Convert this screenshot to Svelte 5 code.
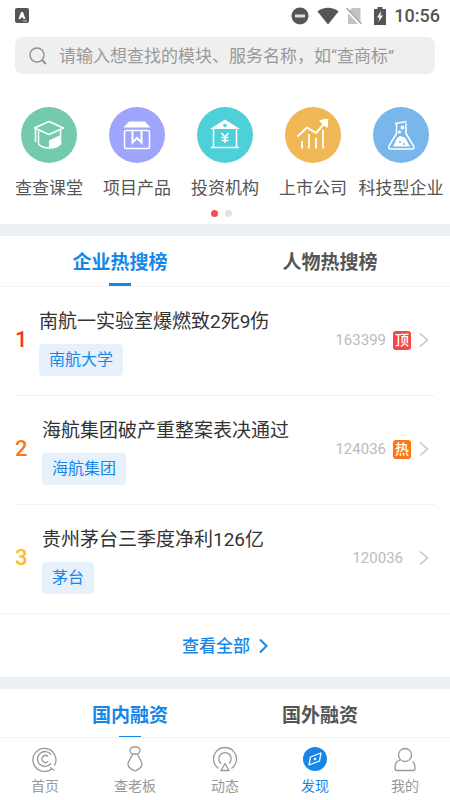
<script lang="ts">
	const services = [
		{ icon: 'class', label: '查查课堂', color: '#74cbac' },
		{ icon: 'product', label: '项目产品', color: '#9fa5fc' },
		{ icon: 'invest', label: '投资机构', color: '#4dd0d8' },
		{ icon: 'listed', label: '上市公司', color: '#efb854' },
		{ icon: 'tech', label: '科技型企业', color: '#79b6eb' }
	];

	const hotList = [
		{ title: '南航一实验室爆燃致2死9伤', tag: '南航大学', count: 163399, badge: '顶' },
		{ title: '海航集团破产重整案表决通过', tag: '海航集团', count: 124036, badge: '热' },
		{ title: '贵州茅台三季度净利126亿', tag: '茅台', count: 120036, badge: '' }
	];

	const hotTabs = ['企业热搜榜', '人物热搜榜'];
	const fundTabs = ['国内融资', '国外融资'];

	const navItems = [
		{ icon: 'home', label: '首页' },
		{ icon: 'boss', label: '查老板' },
		{ icon: 'feed', label: '动态' },
		{ icon: 'discover', label: '发现' },
		{ icon: 'mine', label: '我的' }
	];

	let keyword = $state('');
	let hotTab = $state(0);
	let fundTab = $state(0);
	let activeNav = $state('discover');
</script>

<div class="app">
	<div class="status-bar">
		<svg width="14" height="15" viewBox="0 0 14 15">
			<rect width="14" height="15" rx="2" fill="#555" />
			<path d="M3.5 11 L6 4 H8 L10.500 11 H8.500 L8 9.500 H6 L5.500 11 Z" fill="#fff" />
			<path d="M8 13 H12" stroke="#ccc" />
		</svg>
		<div class="status-right">
			<svg width="18" height="18" viewBox="0 0 18 18">
				<circle cx="9" cy="9" r="8.500" fill="#555" />
				<rect x="4" y="7.500" width="10" height="3" fill="#ddd" />
			</svg>
			<svg class="wifi" width="22" height="18" viewBox="0 0 22 18">
				<path d="M0.500 4.500 C6 -0.500 16 -0.500 21.500 4.500 L11 17.500 Z" fill="#555" />
			</svg>
			<svg class="sim" width="16" height="18" viewBox="0 0 16 18">
				<path d="M6 1 H14.500 V17 H2 V5 Z" fill="#c4c4c4" />
				<path d="M0 2.500 L14 17.500" stroke="#fff" stroke-width="2" />
				<path d="M0.500 1 L15.500 17" stroke="#aaa" stroke-width="1.500" />
			</svg>
			<svg class="battery" width="12" height="18" viewBox="0 0 12 18">
				<path d="M3.500 0 H8.500 V2 H12 V18 H0 V2 H3.500 Z" fill="#555" />
				<path d="M7 4 L3 10.500 H5.500 L4.500 15 L9 8.500 H6.500 Z" fill="#fff" />
			</svg>
			<span class="time">10:56</span>
		</div>
	</div>

	<main>
		<label class="search">
			<svg width="18" height="18" viewBox="0 0 18 18" fill="none" stroke="#8f8f8f" stroke-width="1.400">
				<circle cx="8" cy="8" r="7" />
				<path d="M13 13 L17 17" stroke-width="1.800" />
			</svg>
			<input type="text" aria-label="搜索" placeholder="请输入想查找的模块、服务名称，如“查商标”" bind:value={keyword} />
		</label>

		<div class="services">
			{#each services as item}
				<button class="service">
					<span class="service-icon" style="background: {item.color}">
						<svg width="32" height="32" viewBox="0 0 32 32" fill="none" stroke="#fff" stroke-width="1.500" stroke-linejoin="round">
							{#if item.icon === 'class'}
								<path d="M1.500 9 L16 2.500 L30.500 9 L16 15.500 Z" />
								<path d="M2.500 10 V23 M5.500 12 V25 C8 28 12 29 16 29 C21 29 25 28 27.500 25 V11" />
								<path d="M16 21.500 L27.500 16 V25 C25 28 21 29 16 29 Z" fill="#fff" stroke="none" />
							{:else if item.icon === 'product'}
								<path d="M8 2.500 H24 L29.500 8.500 H2.500 Z" fill="#fff" stroke="none" />
								<rect x="3.500" y="11.500" width="25" height="18" rx="1.500" />
								<path d="M11.500 11.500 V23.500 L16 19 L20.500 23.500 V11.500" stroke-width="2" stroke-linejoin="miter" />
							{:else if item.icon === 'invest'}
								<path d="M16 0.500 L31 10 H1 Z" fill="#fff" stroke="none" />
								<circle cx="16" cy="6.500" r="1.800" fill={item.color} stroke="none" />
								<path d="M4.500 9 V28 M27.500 9 V28 M2 28.500 H30" />
								<path d="M12.500 14 L16 18 L19.500 14 M16 18 V24 M12.500 18.500 H19.500 M12.500 21.500 H19.500" />
							{:else if item.icon === 'listed'}
								<path d="M0.500 17.500 L10 8.500 L19 14 L28 4" stroke-width="2" />
								<path d="M23 2 L30.500 0 L30 8 Z" fill="#fff" />
								<path d="M5 22 V29.500 M12 15 V29.500 M19 19 V29.500 M26 11 V29.500" stroke-width="1.800" />
							{:else}
								<path d="M10 4.500 L21.500 2.500 M11.500 5 V14.500 L4 27 Q3 30 6 30 H27 Q30 30 28.500 27 L21 14.500 V4" />
								<path d="M12 19 L15 17 L20 18.500 L25 27.500 H8 Z" fill="#fff" stroke="none" />
								<circle cx="17.500" cy="8.500" r="1.200" />
								<circle cx="14.500" cy="13" r="0.800" />
								<circle cx="15" cy="23" r="1" fill={item.color} stroke="none" />
								<circle cx="19" cy="25" r="1" fill={item.color} stroke="none" />
							{/if}
						</svg>
					</span>
					{item.label}
				</button>
			{/each}
		</div>
		<div class="dots">
			<span class="dot active"></span>
			<span class="dot"></span>
		</div>

		<section>
			<div class="tabs">
				{#each hotTabs as tab, index}
					<button class="tab" class:active={index === hotTab} onclick={() => (hotTab = index)}>{tab}</button>
				{/each}
			</div>
			<ol class="hot-list">
				{#each hotList as item, index}
					<li class="hot-item">
						<span class="rank rank-{index + 1}">{index + 1}</span>
						<div class="hot-main">
							<span class="hot-title">{item.title}</span>
							<a class="tag" href="#company">{item.tag}</a>
						</div>
						<span class="count">{item.count}</span>
						{#if item.badge}
							<span class="badge" class:top={item.badge === '顶'}>{item.badge}</span>
						{/if}
						<svg class="arrow" width="10" height="16" viewBox="0 0 10 16" fill="none" stroke="#c4c4c4" stroke-width="1.500">
							<path d="M1 1.500 L8.500 8 L1 14.500" />
						</svg>
					</li>
				{/each}
			</ol>
			<a class="more" href="#all">
				查看全部
				<svg width="9" height="16" viewBox="0 0 9 16" fill="none" stroke="#1687e8" stroke-width="2">
					<path d="M1 1.500 L7.500 8 L1 14.500" />
				</svg>
			</a>
		</section>

		<section>
			<div class="tabs narrow">
				{#each fundTabs as tab, index}
					<button class="tab" class:active={index === fundTab} onclick={() => (fundTab = index)}>{tab}</button>
				{/each}
			</div>
		</section>
	</main>

	<nav>
		{#each navItems as item}
			<button class="nav-item" class:active={item.icon === activeNav} onclick={() => (activeNav = item.icon)}>
				<svg width="26" height="26" viewBox="0 0 26 26" fill="none" stroke="currentColor" stroke-width="1.300">
					{#if item.icon === 'home'}
						<path d="M19.500 23 A11.500 11.500 0 1 1 22.500 19.500 M18 21.500 L22.500 24.500" />
						<path d="M19 8.500 A7.500 7.500 0 1 0 19 17.500" />
						<path d="M16 10.500 A3.500 3.500 0 1 0 16 15.500" />
					{:else if item.icon === 'boss'}
						<rect x="8" y="1" width="10" height="7" rx="3.500" />
						<path d="M10.500 8.500 C9 12 6 15 6 18.500 C6 21 10 24 13 25 C16 24 20 21 20 18.500 C20 15 17 12 15.500 8.500" />
					{:else if item.icon === 'feed'}
						<path d="M6.500 22.500 A11.500 11.500 0 1 1 19.500 22.500" />
						<path d="M9 17.500 A6.200 6.200 0 1 1 17 17.500" />
						<path d="M13 17.500 L17 24.500 H9 Z" stroke-linejoin="round" />
					{:else if item.icon === 'discover'}
						<circle cx="13" cy="13" r="12" fill="currentColor" stroke="none" />
						<path d="M19 7 L17.500 15 L7 19 L8.500 11 Z" stroke="#fff" stroke-linejoin="round" />
						<circle cx="13" cy="13" r="1.300" fill="#fff" stroke="none" />
					{:else}
						<circle cx="13" cy="9" r="6.500" />
						<path d="M8 14 C5 15 3 18 3 21 V22.500 Q3 24.500 5 24.500 H21 Q23 24.500 23 22.500 V21 C23 18.500 22 16.500 20.500 15.500" />
					{/if}
				</svg>
				{item.label}
			</button>
		{/each}
	</nav>
</div>

<style>
	:global(body) {
		margin: 0;
		background: #fff;
	}

	.app {
		display: flex;
		flex-direction: column;
		height: 100vh;
		font-family: Roboto, 'Noto Sans CJK SC', sans-serif;
		color: #333;
	}

	button,
	input {
		margin: 0;
		padding: 0;
		border: none;
		background: none;
		font-family: inherit;
		color: inherit;
	}

	button {
		cursor: pointer;
	}

	a {
		text-decoration: none;
	}

	svg {
		display: block;
		flex: none;
	}

	.status-bar {
		display: flex;
		flex: none;
		align-items: center;
		justify-content: space-between;
		height: 31px;
		padding: 0 10px 0 15px;
	}

	.status-right {
		display: flex;
		align-items: center;
	}

	.wifi {
		margin-left: 8px;
	}

	.sim {
		margin-left: 7px;
	}

	.battery {
		margin: 0 8px 0 12px;
	}

	.time {
		font-size: 18px;
		font-weight: 500;
		line-height: 20px;
		color: #555;
	}

	main {
		flex: 1;
		min-height: 0;
		overflow-y: auto;
		scrollbar-width: none;
	}

	.search {
		display: flex;
		align-items: center;
		gap: 12px;
		height: 37px;
		margin: 6px 15px 0;
		padding: 0 14px;
		border-radius: 8px;
		background: #efefef;
	}

	.search input {
		flex: 1;
		min-width: 0;
		font-size: 17px;
		line-height: 24px;
		outline: none;
	}

	.search input::placeholder {
		color: #999;
		opacity: 1;
	}

	.services {
		display: grid;
		grid-template-columns: repeat(5, 1fr);
		padding: 33px 5px 0;
	}

	.service {
		display: flex;
		flex-direction: column;
		align-items: center;
		gap: 13px;
		font-size: 17px;
		line-height: 24px;
		color: #555;
		white-space: nowrap;
	}

	.service-icon {
		display: flex;
		align-items: center;
		justify-content: center;
		width: 56px;
		height: 56px;
		border-radius: 50%;
	}

	.dots {
		display: flex;
		justify-content: center;
		gap: 7px;
		padding: 10px 8px 7px 0;
	}

	.dot {
		width: 7px;
		height: 7px;
		border-radius: 50%;
		background: #e2e2e2;
	}

	.dot.active {
		background: #f94d4d;
	}

	section {
		border-top: 12px solid #ecf0f3;
	}

	.tabs {
		display: flex;
		padding: 0 15px;
		border-bottom: 1px solid #f2f2f2;
	}

	.tabs.narrow {
		padding: 0 35px;
	}

	.tab {
		display: flex;
		flex: 1;
		flex-direction: column;
		align-items: center;
		padding-top: 13px;
		font-size: 19px;
		font-weight: 700;
		line-height: 28px;
		color: #555;
	}

	.tab::after {
		content: '';
		width: 22px;
		height: 3px;
		margin-top: 6px;
	}

	.tab.active {
		color: #1687e8;
	}

	.tab.active::after {
		background: #1687e8;
	}

	.hot-list {
		margin: 0;
		padding: 0 15px;
		list-style: none;
	}

	.hot-item {
		display: flex;
		align-items: center;
		height: 106px;
		padding: 0 6px 2px 0;
	}

	.hot-item + .hot-item {
		border-top: 1px solid #f2f2f2;
	}

	.rank {
		width: 12px;
		margin-right: 15px;
		font-size: 22px;
		font-weight: 500;
		line-height: 28px;
	}

	.rank-1 {
		width: 9px;
		color: #f9361b;
	}

	.rank-2 {
		color: #fb7616;
	}

	.rank-3 {
		color: #fbbc16;
	}

	.hot-main {
		display: flex;
		flex: 1;
		flex-direction: column;
		align-items: flex-start;
		gap: 8px;
		padding-top: 4px;
	}

	.hot-title {
		font-size: 19px;
		line-height: 28px;
	}

	.tag {
		padding: 4px 10px;
		border-radius: 4px;
		background: #e6f1fc;
		font-size: 16px;
		line-height: 24px;
		color: #1687e8;
	}

	.count {
		font-size: 15px;
		line-height: 24px;
		color: #bbb;
	}

	.badge {
		width: 18px;
		margin: 0 -8px 0 7px;
		border-radius: 3px;
		background: #fb7616;
		font-size: 14px;
		font-weight: 500;
		line-height: 19px;
		text-align: center;
		color: #fff;
	}

	.badge.top {
		background: #f94545;
	}

	.arrow {
		margin-left: 16px;
	}

	.more {
		display: flex;
		align-items: center;
		justify-content: center;
		gap: 9px;
		height: 63px;
		border-top: 1px solid #f2f2f2;
		margin: 0;
		font-size: 17px;
		font-weight: 500;
		line-height: 24px;
		color: #1687e8;
	}

	nav {
		display: grid;
		flex: none;
		grid-template-columns: repeat(5, 1fr);
		height: 62px;
		background: #fff;
		box-shadow: 0 -1px 0 #f2f2f2;
	}

	.nav-item {
		display: flex;
		flex-direction: column;
		align-items: center;
		gap: 4px;
		padding-top: 8px;
		font-size: 14px;
		line-height: 20px;
		color: #999;
	}

	.nav-item.active {
		color: #1687e8;
	}
</style>
